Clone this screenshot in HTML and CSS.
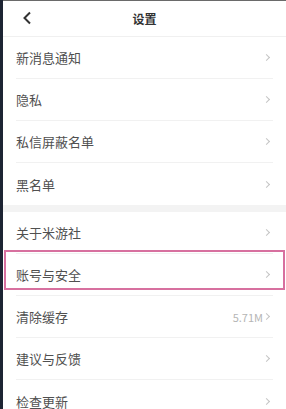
FILE: index.html
```html
<!DOCTYPE html>
<html lang="zh-CN">
<head>
    <meta charset="UTF-8">
    <meta name="viewport" content="width=device-width, initial-scale=1.0">
    <title>设置</title>
    <link rel="stylesheet" href="styles.css">
</head>
<body>
    <div class="screen">
        <div class="header">
            <span class="back">
                <svg width="10" height="14" viewBox="0 0 10 14"><path d="M8 1.5 L2.5 7 L8 12.5" fill="none" stroke="#333" stroke-width="2"/></svg>
            </span>
            <h1>设置</h1>
        </div>
        <ul class="group">
            <li><span>新消息通知</span><i class="arrow"></i></li>
            <li><span>隐私</span><i class="arrow"></i></li>
            <li><span>私信屏蔽名单</span><i class="arrow"></i></li>
            <li><span>黑名单</span><i class="arrow"></i></li>
        </ul>
        <div class="gap"></div>
        <ul class="group">
            <li><span>关于米游社</span><i class="arrow"></i></li>
            <li class="marked"><span>账号与安全</span><i class="arrow"></i></li>
            <li><span>清除缓存</span><em class="size">5.71M</em><i class="arrow"></i></li>
            <li><span>建议与反馈</span><i class="arrow"></i></li>
            <li><span>检查更新</span><i class="arrow"></i></li>
        </ul>
    </div>
</body>
</html>
```

FILE: styles.css
```css
html, body {
    margin: 0;
    padding: 0;
    height: 100%;
    overflow: hidden;
}

body {
    background-color: #1d2433;
    font-family: "Noto Sans CJK SC", "Noto Sans", sans-serif;
    color: #505050;
    padding-left: 3px;
    box-sizing: border-box;
}

.screen {
    background-color: #ffffff;
    border-top: 1px solid #6a6a6a;
    height: 100%;
}

/* Header */
.header {
    position: relative;
    height: 35px;
    display: flex;
    align-items: center;
    justify-content: center;
    border-bottom: 1px solid #f0f0f0;
}

.header h1 {
    margin: 0;
    font-size: 12px;
    font-weight: bold;
    color: #333;
}

.back {
    position: absolute;
    left: 19px;
    top: 10px;
    display: flex;
}

/* List */
.group {
    list-style: none;
    margin: 0;
    padding: 0;
}

.group li {
    position: relative;
    height: 42px;
    margin: 0 13px 0 13px;
    display: flex;
    align-items: center;
    border-bottom: 1px solid #f1f1f1;
    box-sizing: border-box;
    font-size: 13px;
}

.group li:last-child {
    border-bottom: none;
}

.group li span {
    flex: 1;
}

/* highlight frame drawn over the row */
.group li.marked::after {
    content: "";
    position: absolute;
    top: -4px;
    bottom: 5px;
    left: -12px;
    right: -12px;
    border: 2px solid #d7709f;
}

.size {
    font-style: normal;
    font-size: 11px;
    color: #b5b5b5;
    margin-right: 1px;
}

.arrow {
    width: 4px;
    height: 4px;
    border-top: 1px solid #c4c4c4;
    border-right: 1px solid #c4c4c4;
    transform: rotate(45deg);
    margin-right: 4px;
}

.gap {
    height: 7px;
    background-color: #f3f3f3;
}
```
